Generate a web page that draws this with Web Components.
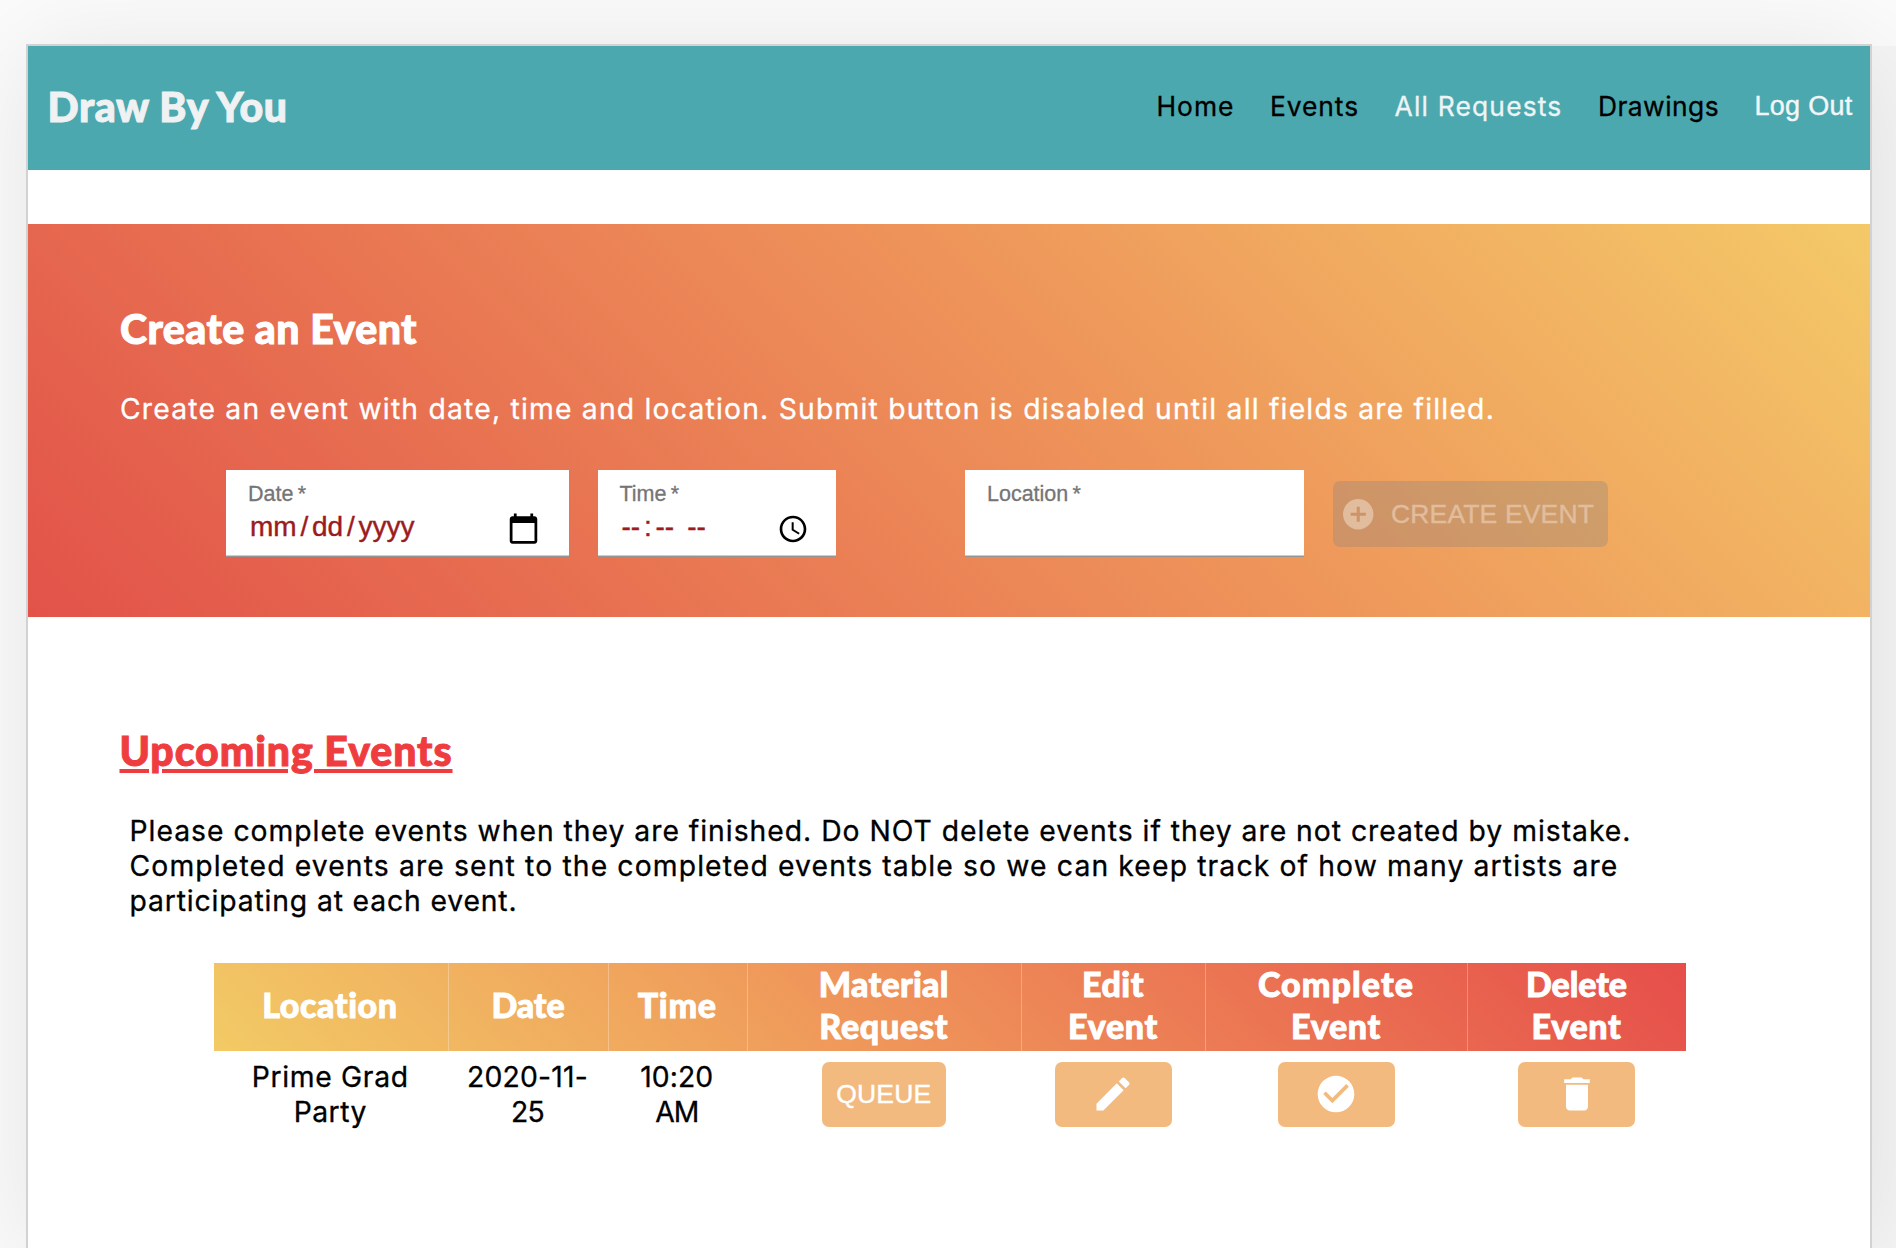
<!DOCTYPE html>
<html lang="en">
<head>
<meta charset="utf-8">
<title>Draw By You</title>
<style>
html,body{margin:0;height:1248px;overflow:hidden;background:#fbfbfb}
body{font:28.3px/35px Inter,"Noto Sans",sans-serif;color:#000;-webkit-text-stroke:.3px}
</style>
</head>
<body>
<page-frame>
  <site-header>
    <fit-text slot="brand" w="238">Draw By You</fit-text>
    <fit-text w="76">Home</fit-text>
    <fit-text w="87">Events</fit-text>
    <fit-text w="166" style="color:#eef4f5">All Requests</fit-text>
    <fit-text w="119">Drawings</fit-text>
    <fit-text w="96" style="color:#f3f6f7;font:27px/36px 'Liberation Sans',Arial,sans-serif;-webkit-text-stroke:.4px">Log Out</fit-text>
  </site-header>
  <event-form></event-form>
  <upcoming-events></upcoming-events>
</page-frame>
<script>
const make = (name, html, ready) => customElements.define(name, class extends HTMLElement {
  constructor() {
    super();
    this.attachShadow({mode: 'open'}).innerHTML = html;
  }
  connectedCallback() { if (ready) ready(this, this.shadowRoot); }
});

make('page-frame', `<style>
:host{display:block;box-sizing:border-box;height:1248px;overflow:hidden;padding:44px 0 0 26px;
 background:linear-gradient(#f5f5f5,#f5f5f5) no-repeat 1872px 46px/24px 1202px}
main{box-sizing:border-box;width:1846px;height:1204px;border:2px solid #d2d2d3;border-bottom:0;background:#fff;box-shadow:0 8px 100px rgba(0,0,0,.095)}
</style><main><slot></slot></main>`);

make('site-header', `<style>
:host{display:flex;justify-content:space-between;align-items:flex-start;height:123.5px;box-sizing:border-box;
 padding:36.5px 18.5px 0 20.5px;background:#4ba8af}
.brand{font:900 41px/48px Lato,sans-serif;color:#f0f1f2;-webkit-text-stroke:1px;padding-top:.5px}
nav{display:flex;gap:37.5px;font-size:26.4px;line-height:36px;padding-top:5px}
</style><div class="brand"><slot name="brand"></slot></div><nav><slot></slot></nav>`);

make('form-field', `<style>
:host{display:flex;flex-direction:column;box-sizing:border-box;height:87px;background:#fff;color:#9b1c20;
 border-bottom:1px solid #949494;box-shadow:inset 0 -1px #ccc;padding:13px 23px 0;
 font:28px/32px "Liberation Sans",Arial,sans-serif;flex:none}
.label{color:#757575;font-size:21.5px;line-height:22px;margin-left:-1px}
.value{display:flex;align-items:center;justify-content:space-between;margin:5px 0 0 1px}
.parts{display:flex;gap:3.8px;white-space:nowrap;-webkit-text-stroke:.4px}
</style><div class="label"><slot name="label"></slot></div>
<div class="value"><div class="parts"><slot></slot></div><slot name="icon"></slot></div>`);

const icons = {
  calendar: 'M20 3h-1V1h-2v2H7V1H5v2H4c-1.1 0-2 .9-2 2v16c0 1.1.9 2 2 2h16c1.1 0 2-.9 2-2V5c0-1.1-.9-2-2-2zm0 18H4V8h16v13z',
  clock: 'M11.99 2C6.47 2 2 6.48 2 12s4.47 10 9.99 10C17.52 22 22 17.52 22 12S17.52 2 11.99 2zM12 20c-4.42 0-8-3.58-8-8s3.58-8 8-8 8 3.58 8 8-3.58 8-8 8zm.5-13H11v6l5.25 3.15.75-1.23-4.5-2.67z',
  add: 'M12 2C6.48 2 2 6.48 2 12s4.48 10 10 10 10-4.48 10-10S17.52 2 12 2zm5 11h-4v4h-2v-4H7v-2h4V7h2v4h4v2z',
  edit: 'M3 17.25V21h3.75L17.81 9.94l-3.75-3.75L3 17.25zM20.71 7.04c.39-.39.39-1.02 0-1.41l-2.34-2.34c-.39-.39-1.02-.39-1.41 0l-1.83 1.83 3.75 3.75 1.83-1.83z',
  check: 'M12 2C6.48 2 2 6.48 2 12s4.48 10 10 10 10-4.48 10-10S17.52 2 12 2zm-2 15l-5-5 1.41-1.41L10 14.17l7.59-7.59L19 8l-9 9z',
  trash: 'M6 19c0 1.1.9 2 2 2h8c1.1 0 2-.9 2-2V7H6v12zM19 4h-3.5l-1-1h-5l-1 1H5v2h14V4z'
};
make('md-icon', `<style>:host{display:block;flex:none}svg{display:block;fill:currentColor}</style>
<svg viewBox="0 0 24 24"><path/></svg>`, (el, root) => {
  const s = root.querySelector('svg'), n = el.getAttribute('size');
  s.setAttribute('width', n); s.setAttribute('height', n);
  root.querySelector('path').setAttribute('d', icons[el.getAttribute('name')]);
});

make('event-form', `<style>
:host{display:block;box-sizing:border-box;height:393px;margin-top:54.5px;padding:81px 92.5px 0 93px;color:#fff;
 background:linear-gradient(45deg,#e25249,#ee945a 57%,#f4c968)}
h2{margin:0 0 38.5px;font:900 41px/48px Lato,sans-serif;-webkit-text-stroke:1px}
.row{display:flex;margin:43.5px 0 0 105px;align-items:flex-start}
.date{width:343px;margin-right:28.5px}.time{width:238.5px;margin-right:129px}.place{width:339px;margin-right:29px}
.create{display:flex;align-items:center;box-sizing:border-box;width:274.5px;height:66px;margin-top:11px;padding-left:7px;gap:15.5px;
 border-radius:7px;background:rgba(128,128,128,.3);color:#e1bd9d;font:26.5px/32px "Liberation Sans",Arial,sans-serif;-webkit-text-stroke:.4px}
.create fit-text{margin-top:-1px}
.date md-icon{margin:1.5px 6.5px 0 0}.time md-icon{margin:2.5px 4px 0 0}
.time i{width:9.5px}
</style>
<h2><fit-text w="295">Create an Event</fit-text></h2>
<fit-text w="1373">Create an event with date, time and location. Submit button is disabled until all fields are filled.</fit-text>
<div class="row">
<form-field class="date"><span slot="label">Date&#8201;*</span><span>mm</span><span>/</span><span>dd</span><span>/</span><span>yyyy</span><md-icon slot="icon" name="calendar" size="33" style="color:#000"></md-icon></form-field>
<form-field class="time"><span slot="label">Time&#8201;*</span><span>--</span><span>:</span><span>--</span><i></i><span style="margin-left:-4px">--</span><md-icon slot="icon" name="clock" size="32" style="color:#000"></md-icon></form-field>
<form-field class="place"><span slot="label">Location&#8201;*</span></form-field>
<div class="create"><md-icon name="add" size="36.5"></md-icon><fit-text w="201">CREATE EVENT</fit-text></div>
</div>`);

make('action-button', `<style>
:host{display:flex;align-items:center;justify-content:center;width:117px;height:65.5px;margin:1.5px auto 0;border-radius:7px;
 background:#f2ba7e;color:#fff;font:26.5px/32px "Liberation Sans",Arial,sans-serif;-webkit-text-stroke:.4px}
</style><slot></slot>`);

make('upcoming-events', `<style>
:host{display:block;padding:110px 0 0 92.5px}
h2{margin:0;font:900 41px/48px Lato,sans-serif;color:#ef3d3f;-webkit-text-stroke:1px}
h2 fit-text{text-decoration:underline;text-decoration-thickness:3.5px;text-underline-offset:3px}
.note{padding:38.5px 0 0 10px}
.grid{display:grid;grid-template-columns:234.5px 160px 138.5px 274.5px 184px 262px 219px;width:1472.5px;margin:44.5px 0 0 93px}
.head{grid-column:1/-1;display:grid;grid-template-columns:subgrid;height:88px;
 background:linear-gradient(45deg,#f2ca65,#ef955a 44%,#e64e4a);color:#fff;font:900 34px/42.3px Lato,sans-serif;-webkit-text-stroke:.9px}
.head>div,.cell{display:flex;flex-direction:column;align-items:center}
.head>div{justify-content:center;padding-bottom:6px;border-left:1px solid rgba(255,255,255,.28);box-sizing:border-box}
.head>div:first-child{border:0}
.cell{padding-top:9px}
.head fit-text,.cell>fit-text{margin-left:-1px}
</style>
<h2><fit-text w="331">Upcoming Events</fit-text></h2>
<div class="note">
<fit-text w="1500">Please complete events when they are finished. Do NOT delete events if they are not created by mistake.</fit-text>
<fit-text w="1487">Completed events are sent to the completed events table so we can keep track of how many artists are</fit-text>
<fit-text w="386">participating at each event.</fit-text>
</div>
<div class="grid">
<div class="head">
<div><fit-text w="134">Location</fit-text></div>
<div><fit-text w="71">Date</fit-text></div>
<div><fit-text w="77">Time</fit-text></div>
<div><fit-text w="128">Material</fit-text><fit-text w="127">Request</fit-text></div>
<div><fit-text w="60">Edit</fit-text><fit-text w="88">Event</fit-text></div>
<div><fit-text w="154">Complete</fit-text><fit-text w="88">Event</fit-text></div>
<div><fit-text w="99">Delete</fit-text><fit-text w="88">Event</fit-text></div>
</div>
<div class="cell"><fit-text w="155">Prime Grad</fit-text><fit-text w="71">Party</fit-text></div>
<div class="cell"><fit-text w="119">2020-11-</fit-text><fit-text w="31">25</fit-text></div>
<div class="cell"><fit-text w="71">10:20</fit-text><fit-text w="41">AM</fit-text></div>
<div class="cell"><action-button style="width:124px"><fit-text w="93">QUEUE</fit-text></action-button></div>
<div class="cell"><action-button><md-icon name="edit" size="44"></md-icon></action-button></div>
<div class="cell"><action-button><md-icon name="check" size="44"></md-icon></action-button></div>
<div class="cell"><action-button><md-icon name="trash" size="44"></md-icon></action-button></div>
</div>`);

/* Tracks a line of text out to the width given in "w". Defined last, so the
   elements around it have already passed down the font it measures with. */
make('fit-text', `<style>
:host{display:block;white-space:nowrap;flex:none}
span{display:inline-block;margin-left:-1px;text-decoration:inherit}
</style><span><slot></slot></span>`, (el, root) => {
  const w = +el.getAttribute('w'), s = root.querySelector('span');
  el.style.width = w + 'px';
  s.style.letterSpacing = '0px';
  s.style.letterSpacing = (w + 2 - s.getBoundingClientRect().width) / el.textContent.length + 'px';
});
</script>
</body>
</html>
